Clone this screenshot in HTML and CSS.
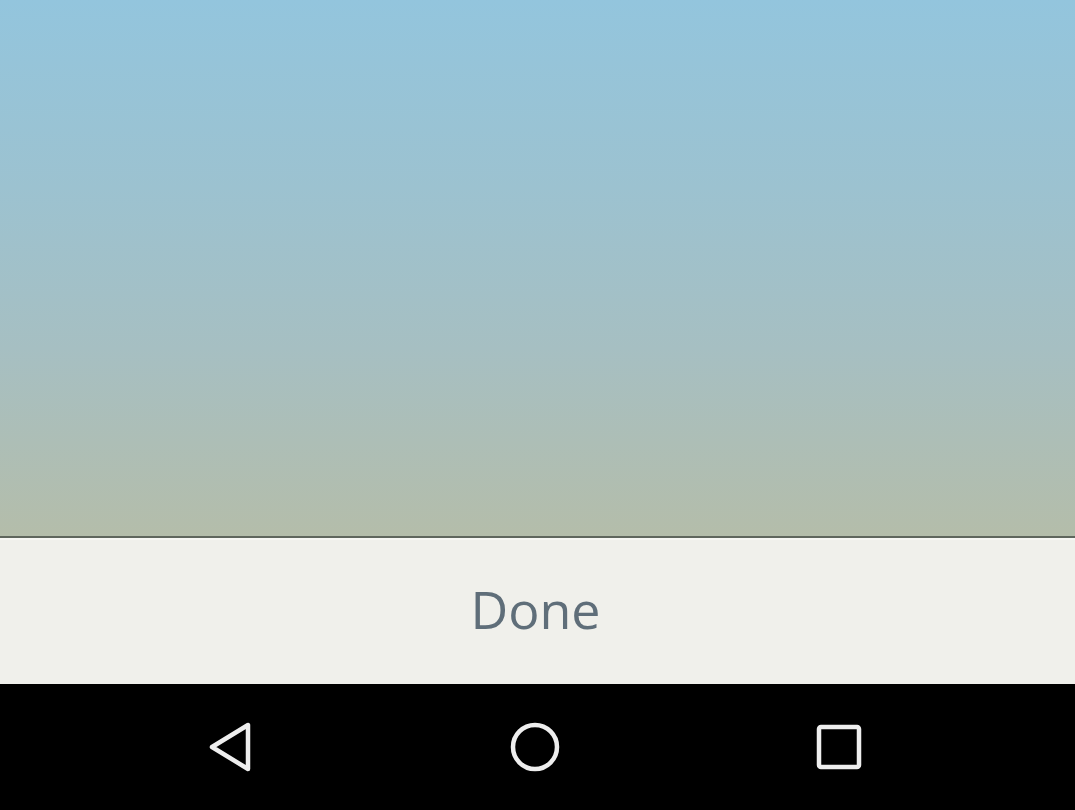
FILE: index.html
```html
<!DOCTYPE html>
<html>
<head>
<meta charset="utf-8">
<link rel="stylesheet" href="styles.css">
</head>
<body>
<div class="screen">
  <div class="sky"></div>
  <div class="panel">
    <div class="done">Done</div>
  </div>
  <nav class="navbar">
    <div class="nav-btn">
      <svg width="48" height="54" viewBox="0 0 48 54"><path d="M41 5 L41 49 L5 27 Z" fill="none" stroke="#eeeeee" stroke-width="4.5" stroke-linejoin="round"/></svg>
    </div>
    <div class="nav-btn">
      <svg width="54" height="54" viewBox="0 0 54 54"><circle cx="27" cy="27" r="22" fill="none" stroke="#eeeeee" stroke-width="4.5"/></svg>
    </div>
    <div class="nav-btn">
      <svg width="54" height="54" viewBox="0 0 54 54"><rect x="7" y="7" width="40" height="40" rx="2" fill="none" stroke="#eeeeee" stroke-width="4.5"/></svg>
    </div>
  </nav>
</div>
</body>
</html>
```

FILE: styles.css
```css
html, body {
  margin: 0;
  padding: 0;
  background: #000;
}
.screen {
  width: 1075px;
  height: 810px;
  display: flex;
  flex-direction: column;
  overflow: hidden;
}
.sky {
  height: 536px;
  background: linear-gradient(to bottom, #93c5dd 0%, #9cc2d0 35%, #a6bfc2 65%, #b4bdaa 100%);
  border-bottom: 2px solid #5f665d;
}
.panel {
  height: 146px;
  background: #f0f0eb;
  border-top: 2px solid #f7f7f4;
  display: flex;
  align-items: center;
  justify-content: center;
  box-sizing: border-box;
}
.done {
  font-family: "Open Sans", sans-serif;
  font-size: 52px;
  color: #5f6e79;
  line-height: 1;
  padding-bottom: 6px;
  padding-right: 4px;
}
.navbar {
  flex: 1;
  background: #000;
  display: grid;
  grid-template-columns: repeat(3, 304px);
  justify-content: center;
  align-items: center;
  padding-right: 5px;
}
.nav-btn {
  display: flex;
  justify-content: center;
  align-items: center;
}
```
